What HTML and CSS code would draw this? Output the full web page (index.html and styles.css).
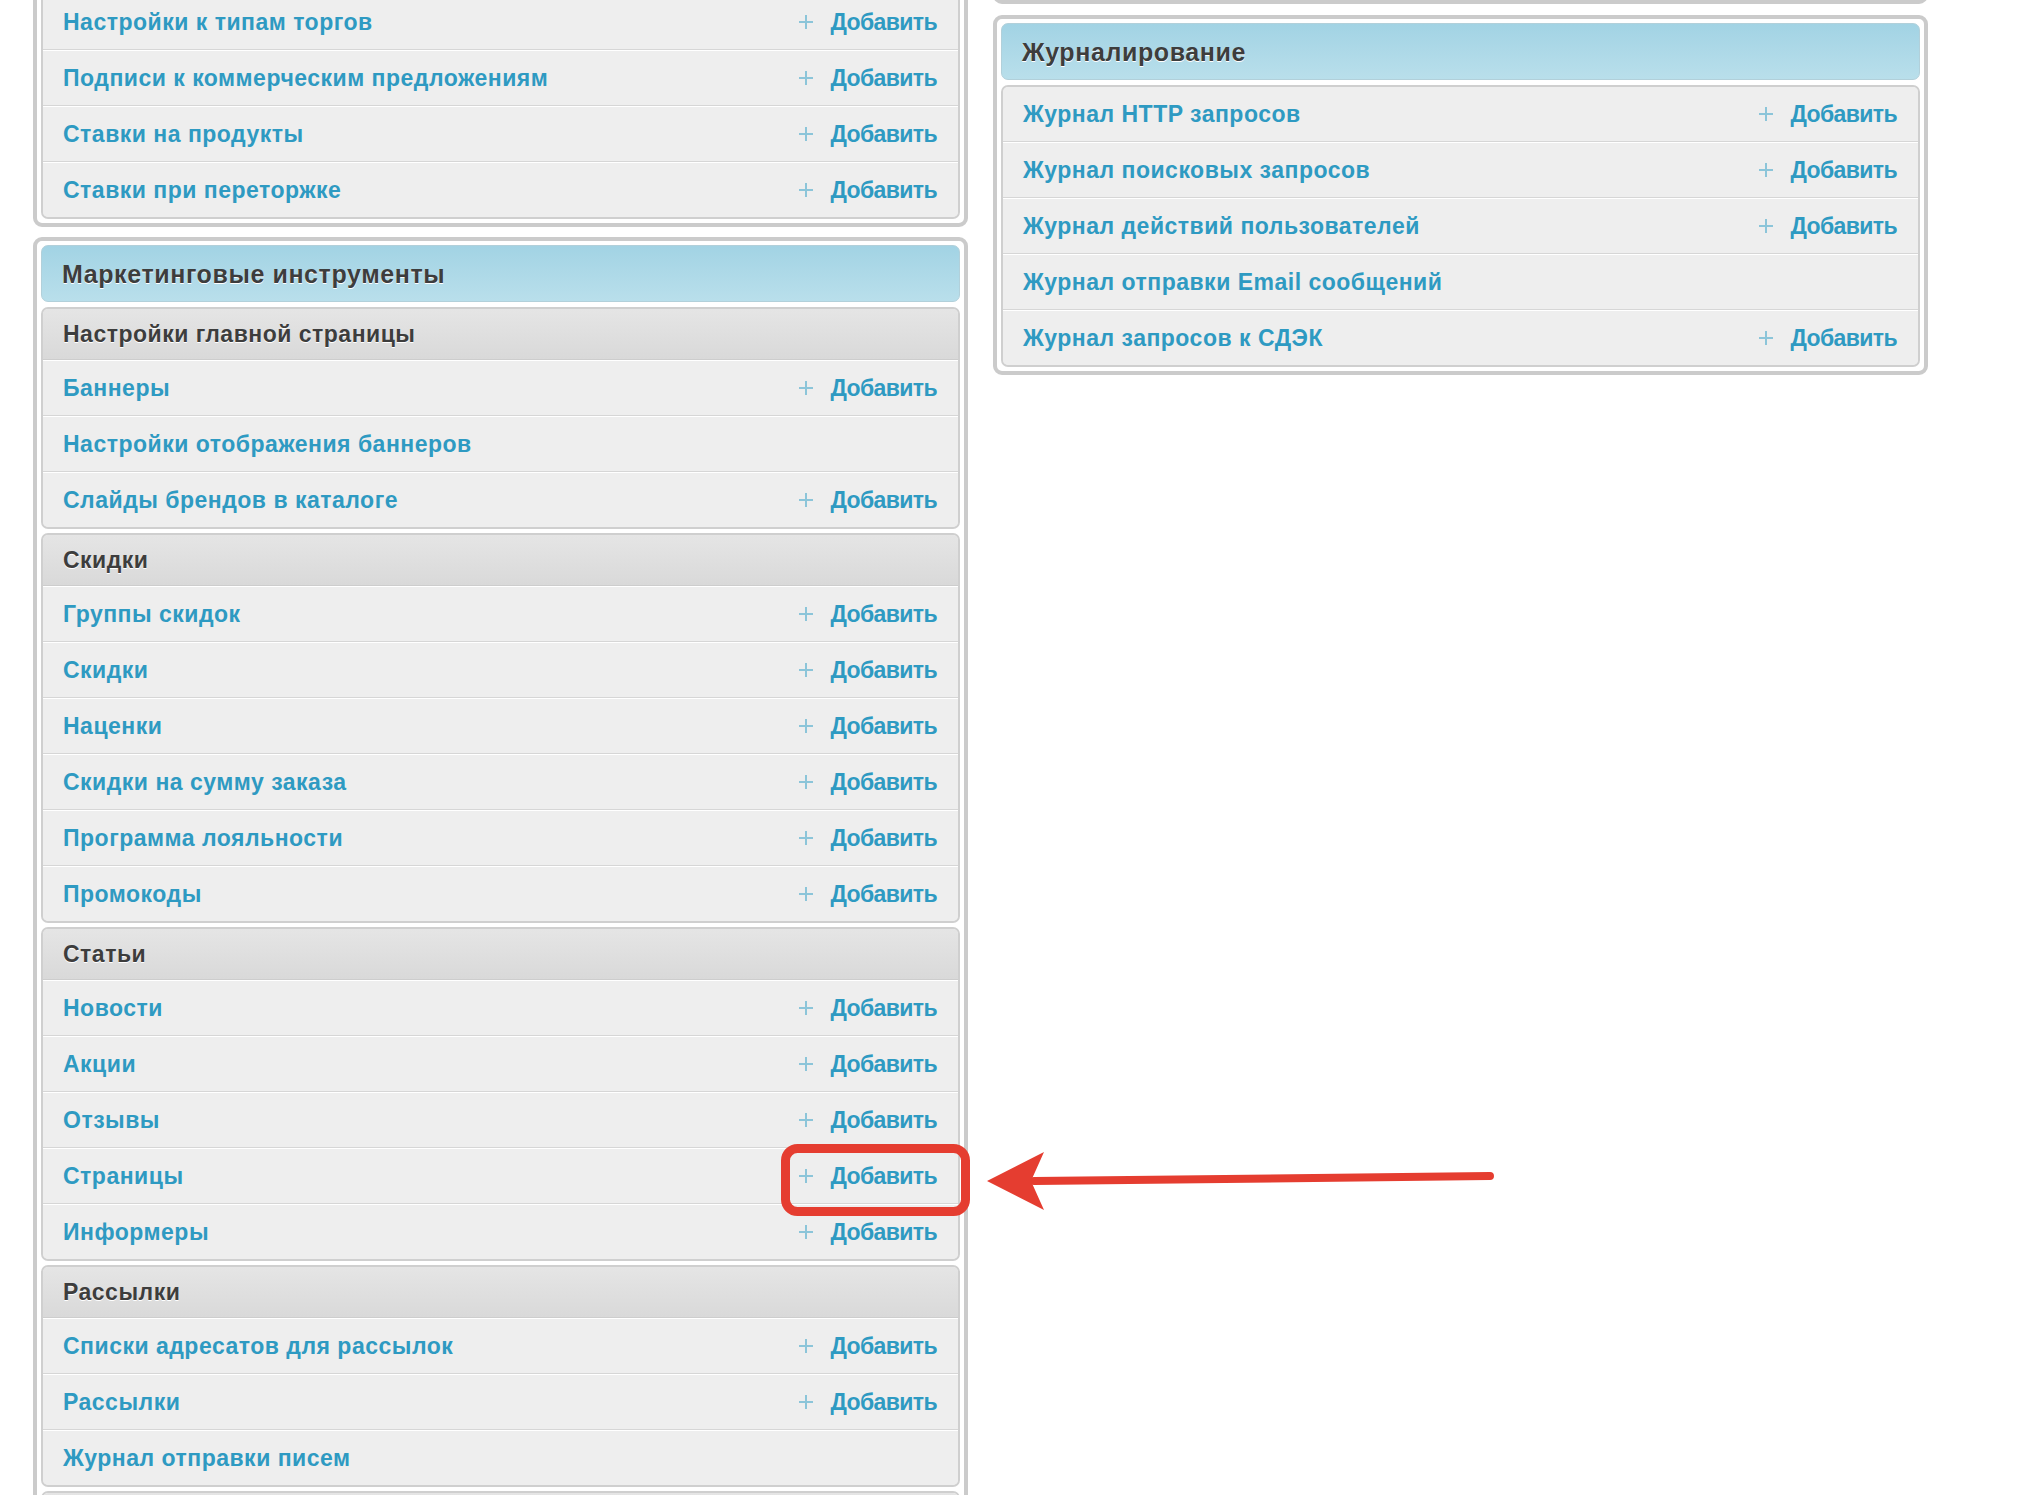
FILE: index.html
```html
<!DOCTYPE html>
<html lang="ru">
<head>
  <meta charset="UTF-8">
  <title>Администрирование</title>
  <link rel="stylesheet" href="styles.css">
</head>
<body>
  <div class="page">
    <div class="col">
      <div class="panel panel-top">
        <div class="group">
          <div class="row"><a href="#">Настройки к типам торгов</a><a class="add" href="#"><svg viewBox="0 0 14 14"><path d="M7 0v14M0 7h14"/></svg>Добавить</a></div>
          <div class="row"><a href="#">Подписи к коммерческим предложениям</a><a class="add" href="#"><svg viewBox="0 0 14 14"><path d="M7 0v14M0 7h14"/></svg>Добавить</a></div>
          <div class="row"><a href="#">Ставки на продукты</a><a class="add" href="#"><svg viewBox="0 0 14 14"><path d="M7 0v14M0 7h14"/></svg>Добавить</a></div>
          <div class="row"><a href="#">Ставки при переторжке</a><a class="add" href="#"><svg viewBox="0 0 14 14"><path d="M7 0v14M0 7h14"/></svg>Добавить</a></div>
        </div>
      </div>

      <div class="panel">
        <div class="panel-head">Маркетинговые инструменты</div>

        <div class="group">
          <div class="group-head">Настройки главной страницы</div>
          <div class="row"><a href="#">Баннеры</a><a class="add" href="#"><svg viewBox="0 0 14 14"><path d="M7 0v14M0 7h14"/></svg>Добавить</a></div>
          <div class="row"><a href="#">Настройки отображения баннеров</a></div>
          <div class="row"><a href="#">Слайды брендов в каталоге</a><a class="add" href="#"><svg viewBox="0 0 14 14"><path d="M7 0v14M0 7h14"/></svg>Добавить</a></div>
        </div>

        <div class="group">
          <div class="group-head">Скидки</div>
          <div class="row"><a href="#">Группы скидок</a><a class="add" href="#"><svg viewBox="0 0 14 14"><path d="M7 0v14M0 7h14"/></svg>Добавить</a></div>
          <div class="row"><a href="#">Скидки</a><a class="add" href="#"><svg viewBox="0 0 14 14"><path d="M7 0v14M0 7h14"/></svg>Добавить</a></div>
          <div class="row"><a href="#">Наценки</a><a class="add" href="#"><svg viewBox="0 0 14 14"><path d="M7 0v14M0 7h14"/></svg>Добавить</a></div>
          <div class="row"><a href="#">Скидки на сумму заказа</a><a class="add" href="#"><svg viewBox="0 0 14 14"><path d="M7 0v14M0 7h14"/></svg>Добавить</a></div>
          <div class="row"><a href="#">Программа лояльности</a><a class="add" href="#"><svg viewBox="0 0 14 14"><path d="M7 0v14M0 7h14"/></svg>Добавить</a></div>
          <div class="row"><a href="#">Промокоды</a><a class="add" href="#"><svg viewBox="0 0 14 14"><path d="M7 0v14M0 7h14"/></svg>Добавить</a></div>
        </div>

        <div class="group">
          <div class="group-head">Статьи</div>
          <div class="row"><a href="#">Новости</a><a class="add" href="#"><svg viewBox="0 0 14 14"><path d="M7 0v14M0 7h14"/></svg>Добавить</a></div>
          <div class="row"><a href="#">Акции</a><a class="add" href="#"><svg viewBox="0 0 14 14"><path d="M7 0v14M0 7h14"/></svg>Добавить</a></div>
          <div class="row"><a href="#">Отзывы</a><a class="add" href="#"><svg viewBox="0 0 14 14"><path d="M7 0v14M0 7h14"/></svg>Добавить</a></div>
          <div class="row"><a href="#">Страницы</a><a class="add" href="#"><svg viewBox="0 0 14 14"><path d="M7 0v14M0 7h14"/></svg>Добавить</a></div>
          <div class="row"><a href="#">Информеры</a><a class="add" href="#"><svg viewBox="0 0 14 14"><path d="M7 0v14M0 7h14"/></svg>Добавить</a></div>
        </div>

        <div class="group">
          <div class="group-head">Рассылки</div>
          <div class="row"><a href="#">Списки адресатов для рассылок</a><a class="add" href="#"><svg viewBox="0 0 14 14"><path d="M7 0v14M0 7h14"/></svg>Добавить</a></div>
          <div class="row"><a href="#">Рассылки</a><a class="add" href="#"><svg viewBox="0 0 14 14"><path d="M7 0v14M0 7h14"/></svg>Добавить</a></div>
          <div class="row"><a href="#">Журнал отправки писем</a></div>
        </div>

        <div class="group">
          <div class="group-head"></div>
        </div>
      </div>
    </div>

    <div class="col">
      <div class="panel panel-stub"></div>

      <div class="panel">
        <div class="panel-head">Журналирование</div>
        <div class="group">
          <div class="row"><a href="#">Журнал HTTP запросов</a><a class="add" href="#"><svg viewBox="0 0 14 14"><path d="M7 0v14M0 7h14"/></svg>Добавить</a></div>
          <div class="row"><a href="#">Журнал поисковых запросов</a><a class="add" href="#"><svg viewBox="0 0 14 14"><path d="M7 0v14M0 7h14"/></svg>Добавить</a></div>
          <div class="row"><a href="#">Журнал действий пользователей</a><a class="add" href="#"><svg viewBox="0 0 14 14"><path d="M7 0v14M0 7h14"/></svg>Добавить</a></div>
          <div class="row"><a href="#">Журнал отправки Email сообщений</a></div>
          <div class="row"><a href="#">Журнал запросов к СДЭК</a><a class="add" href="#"><svg viewBox="0 0 14 14"><path d="M7 0v14M0 7h14"/></svg>Добавить</a></div>
        </div>
      </div>
    </div>
  </div>

  <!-- пометка поверх скриншота -->
  <svg class="annot" viewBox="0 0 2036 1495">
    <rect x="785.5" y="1148.5" width="180" height="63" rx="12" fill="none" stroke="#e53d30" stroke-width="9"/>
    <path d="M1034 1181 L1490 1176" stroke="#e53d30" stroke-width="8" stroke-linecap="round"/>
    <path d="M987 1181 L1044 1152 L1031 1181 L1044 1210 Z" fill="#e53d30"/>
  </svg>
</body>
</html>
```

FILE: styles.css
```css
html, body {
  overflow: hidden;
}

body {
  margin: 0;
  background: #fff;
  font-family: 'Liberation Sans', Arial, sans-serif;
  font-weight: bold;
  font-size: 23px;
  letter-spacing: 0.5px;
  position: relative;
  min-height: 1495px;
}

a {
  color: #2e9ac2;
  text-decoration: none;
}

.page {
  display: flex;
  align-items: flex-start;
  gap: 25px;
  padding-left: 33px;
}

.col {
  width: 935px;
  display: flex;
  flex-direction: column;
  gap: 11px;
}

.panel {
  border: 4px solid #cbcbcb;
  border-radius: 9px;
  padding: 4px;
  background: #fff;
}

.panel-top {
  margin-top: -15px;
}

.panel-top + .panel {
  margin-top: -1px;
}

.panel-stub {
  margin-top: -26px;
  height: 22px;
  padding: 0;
}

.panel-head {
  height: 55px;
  display: flex;
  align-items: center;
  padding: 1px 20px 0;
  box-sizing: border-box;
  height: 57px;
  font-size: 25px;
  letter-spacing: 0.6px;
  color: #3d3d3d;
  text-shadow: 0 1px 0 #fff;
  background: linear-gradient(#a2d3e4, #b9dfeb);
  border: 1px solid #b2d0da;
  border-radius: 7px;
  margin-bottom: 5px;
}

.group {
  border: 2px solid #cfcfcf;
  border-radius: 7px;
  overflow: hidden;
  background: #eee;
}

.group + .group {
  margin-top: 4px;
}

.group-head {
  height: 50px;
  display: flex;
  align-items: center;
  padding: 0 20px;
  color: #3d3d3d;
  text-shadow: 0 1px 0 #fff;
  background: linear-gradient(#e5e5e5, #d9d9d9);
  border-bottom: 1px solid #cdcdcd;
}

.row {
  height: 54px;
  display: flex;
  align-items: center;
  justify-content: space-between;
  padding: 0 21px 0 20px;
  background: #eee;
  border-top: 1px solid #fff;
  border-bottom: 1px solid #d6d6d6;
}

.row:first-child {
  border-top: none;
}

.row:last-child {
  border-bottom: none;
}

.add {
  display: flex;
  align-items: center;
  letter-spacing: -0.6px;
}

.add svg {
  width: 14px;
  height: 14px;
  margin-right: 17px;
  stroke: #8cc5d9;
  stroke-width: 2;
  fill: none;
}

.annot {
  position: absolute;
  left: 0;
  top: 0;
  width: 2036px;
  height: 1495px;
  pointer-events: none;
}
```
